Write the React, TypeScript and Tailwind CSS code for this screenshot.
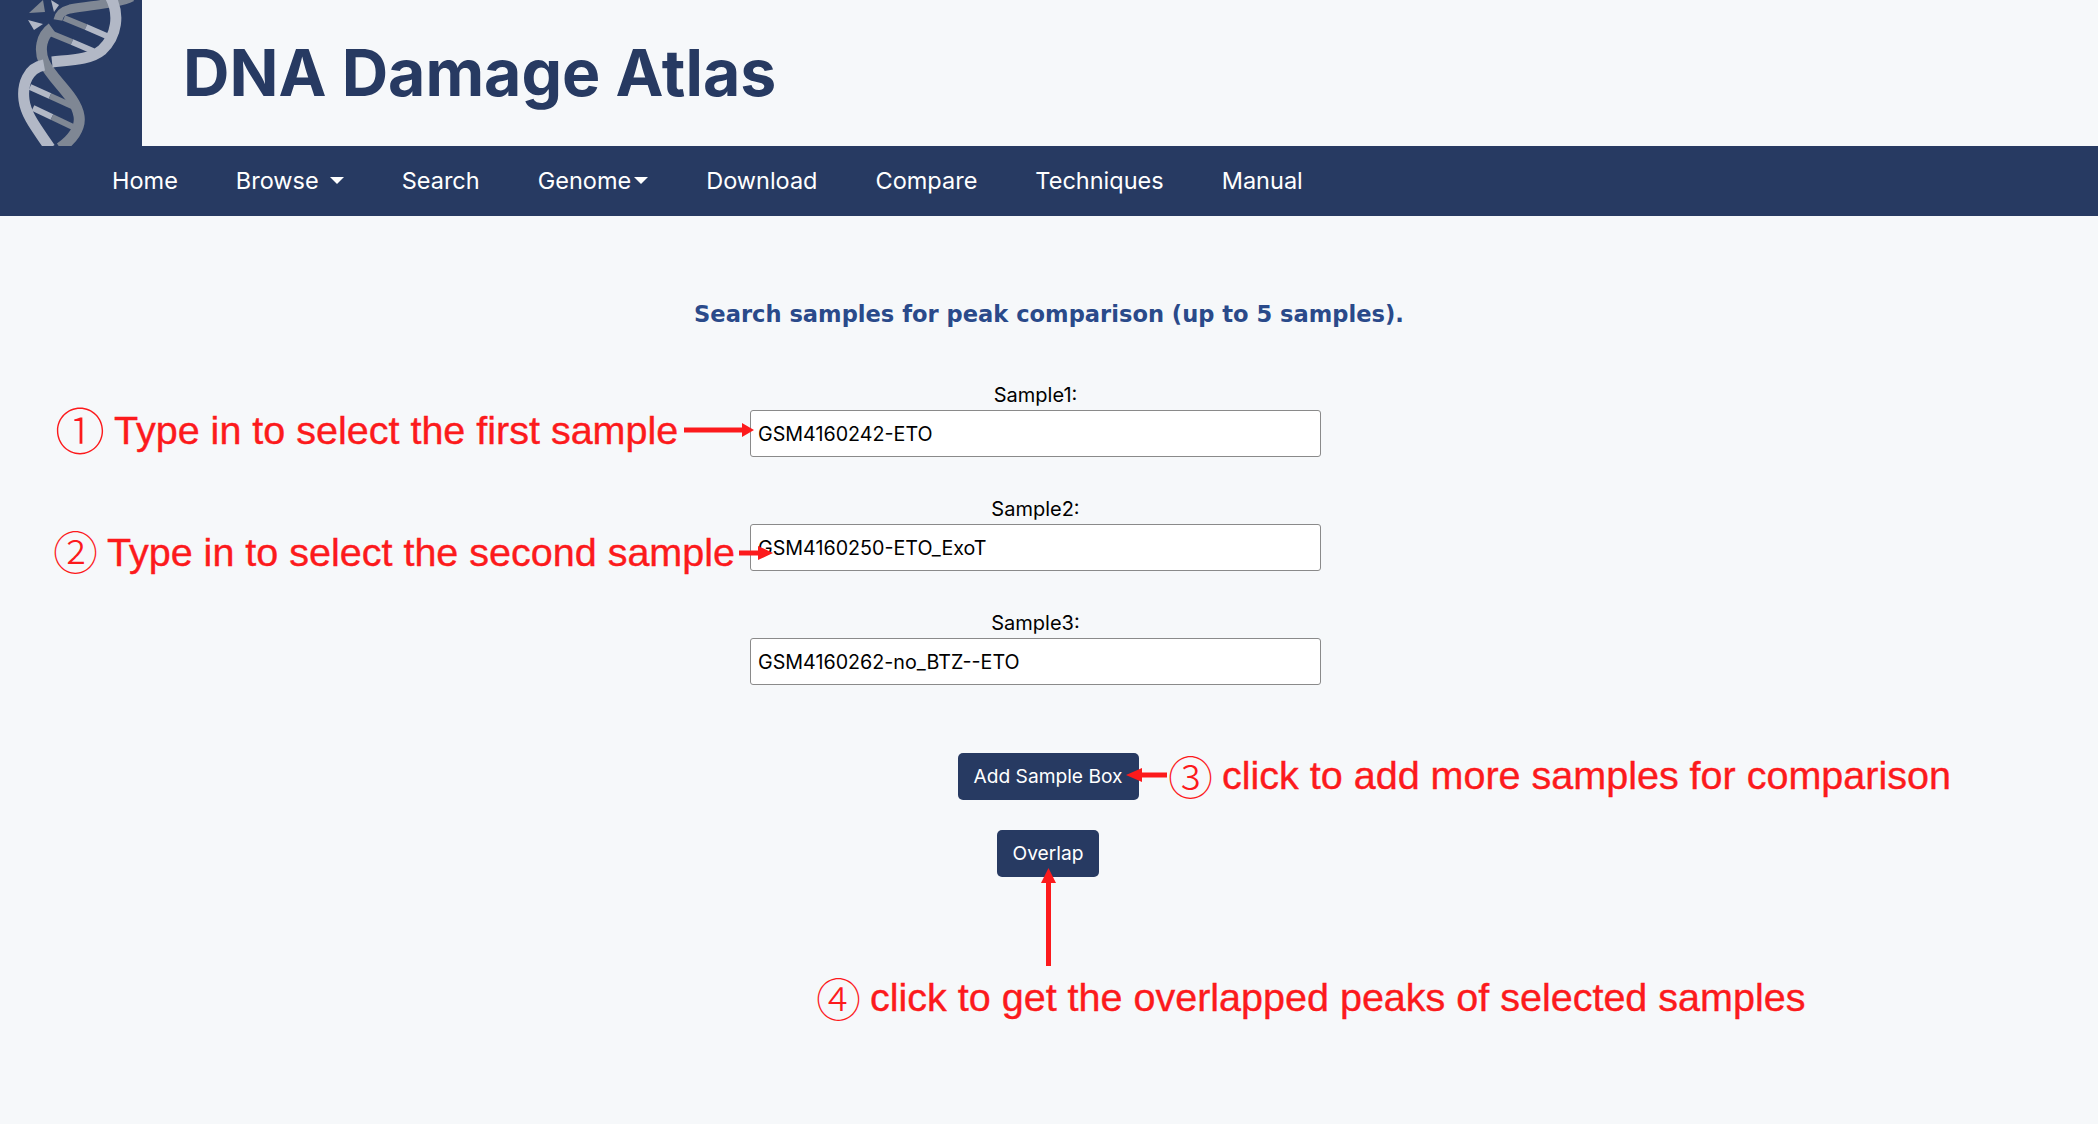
import React from "react";

const navItems = [
  { label: "Home" },
  { label: "Browse", caret: "ml-[11px]" },
  { label: "Search" },
  { label: "Genome", caret: "ml-[3px]" },
  { label: "Download" },
  { label: "Compare" },
  { label: "Techniques" },
  { label: "Manual" },
];

const samples = [
  { label: "Sample1:", value: "GSM4160242-ETO" },
  { label: "Sample2:", value: "GSM4160250-ETO_ExoT" },
  { label: "Sample3:", value: "GSM4160262-no_BTZ--ETO" },
];

const DnaLogo = () => (
  <svg width="142" height="146" viewBox="0 0 142 146" fill="none" className="block">
    <path d="M132 -3 C118 4 92 5 70 9 C62 11 59 14 58 20" stroke="#7f8794" strokeWidth="9" />
    <path d="M64 18 L86 27" stroke="#7f8794" strokeWidth="6" />
    <path d="M86 27 L109 37" stroke="#b2b8c6" strokeWidth="6" />
    <path d="M50 33 L72 42" stroke="#7f8794" strokeWidth="6" />
    <path d="M72 42 L93 51" stroke="#b2b8c6" strokeWidth="6" />
    <path d="M30 87 L50 96" stroke="#b2b8c6" strokeWidth="6" />
    <path d="M50 96 L72 106" stroke="#7f8794" strokeWidth="6" />
    <path d="M33 108 L52 117" stroke="#b2b8c6" strokeWidth="6" />
    <path d="M52 117 L73 127" stroke="#7f8794" strokeWidth="6" />
    <path d="M52 28 C41 36 39 50 44 62 C52 80 76 96 79 116 C81 128 72 140 60 148" stroke="#7f8794" strokeWidth="11" />
    <path d="M110 -4 C120 14 117 36 102 50 C90 60 70 60 52 62" stroke="#b2b8c6" strokeWidth="11" />
    <path d="M44 65 C28 68 22 84 24 100 C26 116 38 130 50 148" stroke="#b2b8c6" strokeWidth="11" />
    <path d="M29 13 L43 0 L45 12 Z" fill="#7f8794" />
    <path d="M28 20 L43 24 L34 30 Z" fill="#b2b8c6" />
    <path d="M51 0 L59 5 L54 12 Z" fill="#b2b8c6" />
  </svg>
);

const Arrow = ({ className, width, height, d }: { className: string; width: number; height: number; d: string }) => (
  <svg className={`absolute ${className}`} width={width} height={height} viewBox={`0 0 ${width} ${height}`}>
    <path d={d} fill="#fc1a1c" />
  </svg>
);

const Note = ({ className, digit, digitClass, children }: { className: string; digit: string; digitClass: string; children: React.ReactNode }) => (
  <div className={`absolute flex items-center whitespace-nowrap text-[39.5px] leading-[50px] text-[#fc1a1c] [-webkit-text-stroke:0.4px_#fc1a1c] font-['Liberation_Sans',Arial,sans-serif] ${className}`}>
    <span className={`font-['Noto_Sans_CJK_SC','Liberation_Sans',sans-serif] font-light [-webkit-text-stroke:0px] ${digitClass}`}>{digit}</span>
    <span>{children}</span>
  </div>
);

export default function App() {
  return (
    <div className="relative min-h-[1124px] bg-[#f6f8fa] font-['Inter',sans-serif] overflow-hidden">
      {/* HEADER */}
      <header className="flex h-[146px] items-center">
        <div className="h-[146px] w-[142px] bg-[#273a62]">
          <DnaLogo />
        </div>
        <h1 className="ml-[41px] text-[64.3px] font-bold leading-none text-[#273a62]">DNA Damage Atlas</h1>
      </header>

      {/* NAV */}
      <nav className="flex h-[70px] items-center bg-[#273a62] pl-[83px] text-[23.5px] text-white">
        {navItems.map((item) => (
          <div key={item.label} className="flex items-center px-[29px]">
            {item.label}
            {item.caret && (
              <span className={`${item.caret} mb-[1px] h-0 w-0 border-x-[7px] border-t-[7px] border-x-transparent border-t-white`} />
            )}
          </div>
        ))}
      </nav>

      {/* SEARCH FORM */}
      <main className="flex flex-col items-center pt-[83px]">
        <h2 className="font-['DejaVu_Sans',Verdana,sans-serif] text-[22.6px] font-bold leading-[30px] text-[#2a4a8a]">
          Search samples for peak comparison (up to 5 samples).
        </h2>
        <div className="mr-[27px] mt-[52px] flex w-[571px] flex-col gap-[38px]">
          {samples.map((s) => (
            <div key={s.label} className="flex flex-col">
              <label className="h-[29px] text-center text-[20px] leading-[29px] text-black">{s.label}</label>
              <input
                readOnly
                value={s.value}
                className="h-[47px] w-full rounded-[3px] border border-[#8a8a8a] bg-white px-[7px] text-[19.7px] text-black outline-none"
              />
            </div>
          ))}
        </div>
        <button className="mr-[2px] mt-[68px] h-[47px] w-[181px] rounded-[5px] bg-[#273a62] text-[19.2px] text-white">Add Sample Box</button>
        <button className="mr-[2px] mt-[30px] h-[47px] w-[102px] rounded-[5px] bg-[#273a62] text-[19.2px] text-white">Overlap</button>
      </main>

      {/* ANNOTATIONS */}
      <Note className="left-[55px] top-[405px]" digitClass="text-[50px] mr-[9px] -translate-y-[2px]" digit="①">Type in to select the first sample</Note>
      <Note className="left-[53px] top-[527px]" digitClass="text-[45px] mr-[9px] -translate-y-[1px]" digit="②">Type in to select the second sample</Note>
      <Note className="left-[1168px] top-[750px]" digitClass="text-[45px] mr-[9px] translate-y-[1px]" digit="③">click to add more samples for comparison</Note>
      <Note className="left-[816px] top-[972px]" digitClass="text-[45px] mr-[9px] translate-y-[1px]" digit="④">click to get the overlapped peaks of selected samples</Note>

      <Arrow className="left-[684px] top-[423px]" width={70} height={14} d="M0 4.5 H58 V0 L70 7 L58 14 V9.5 H0 Z" />
      <Arrow className="left-[739px] top-[546px]" width={34} height={14} d="M0 4.5 H19 V0 L34 7 L19 14 V9.5 H0 Z" />
      <Arrow className="left-[1126px] top-[768px]" width={41} height={14} d="M41 4.5 H16 V0 L0 7 L16 14 V9.5 H41 Z" />
      <Arrow className="left-[1041px] top-[868px]" width={15} height={98} d="M0 15 L7.5 0 L15 15 H10 V98 H5 V15 Z" />
    </div>
  );
}
